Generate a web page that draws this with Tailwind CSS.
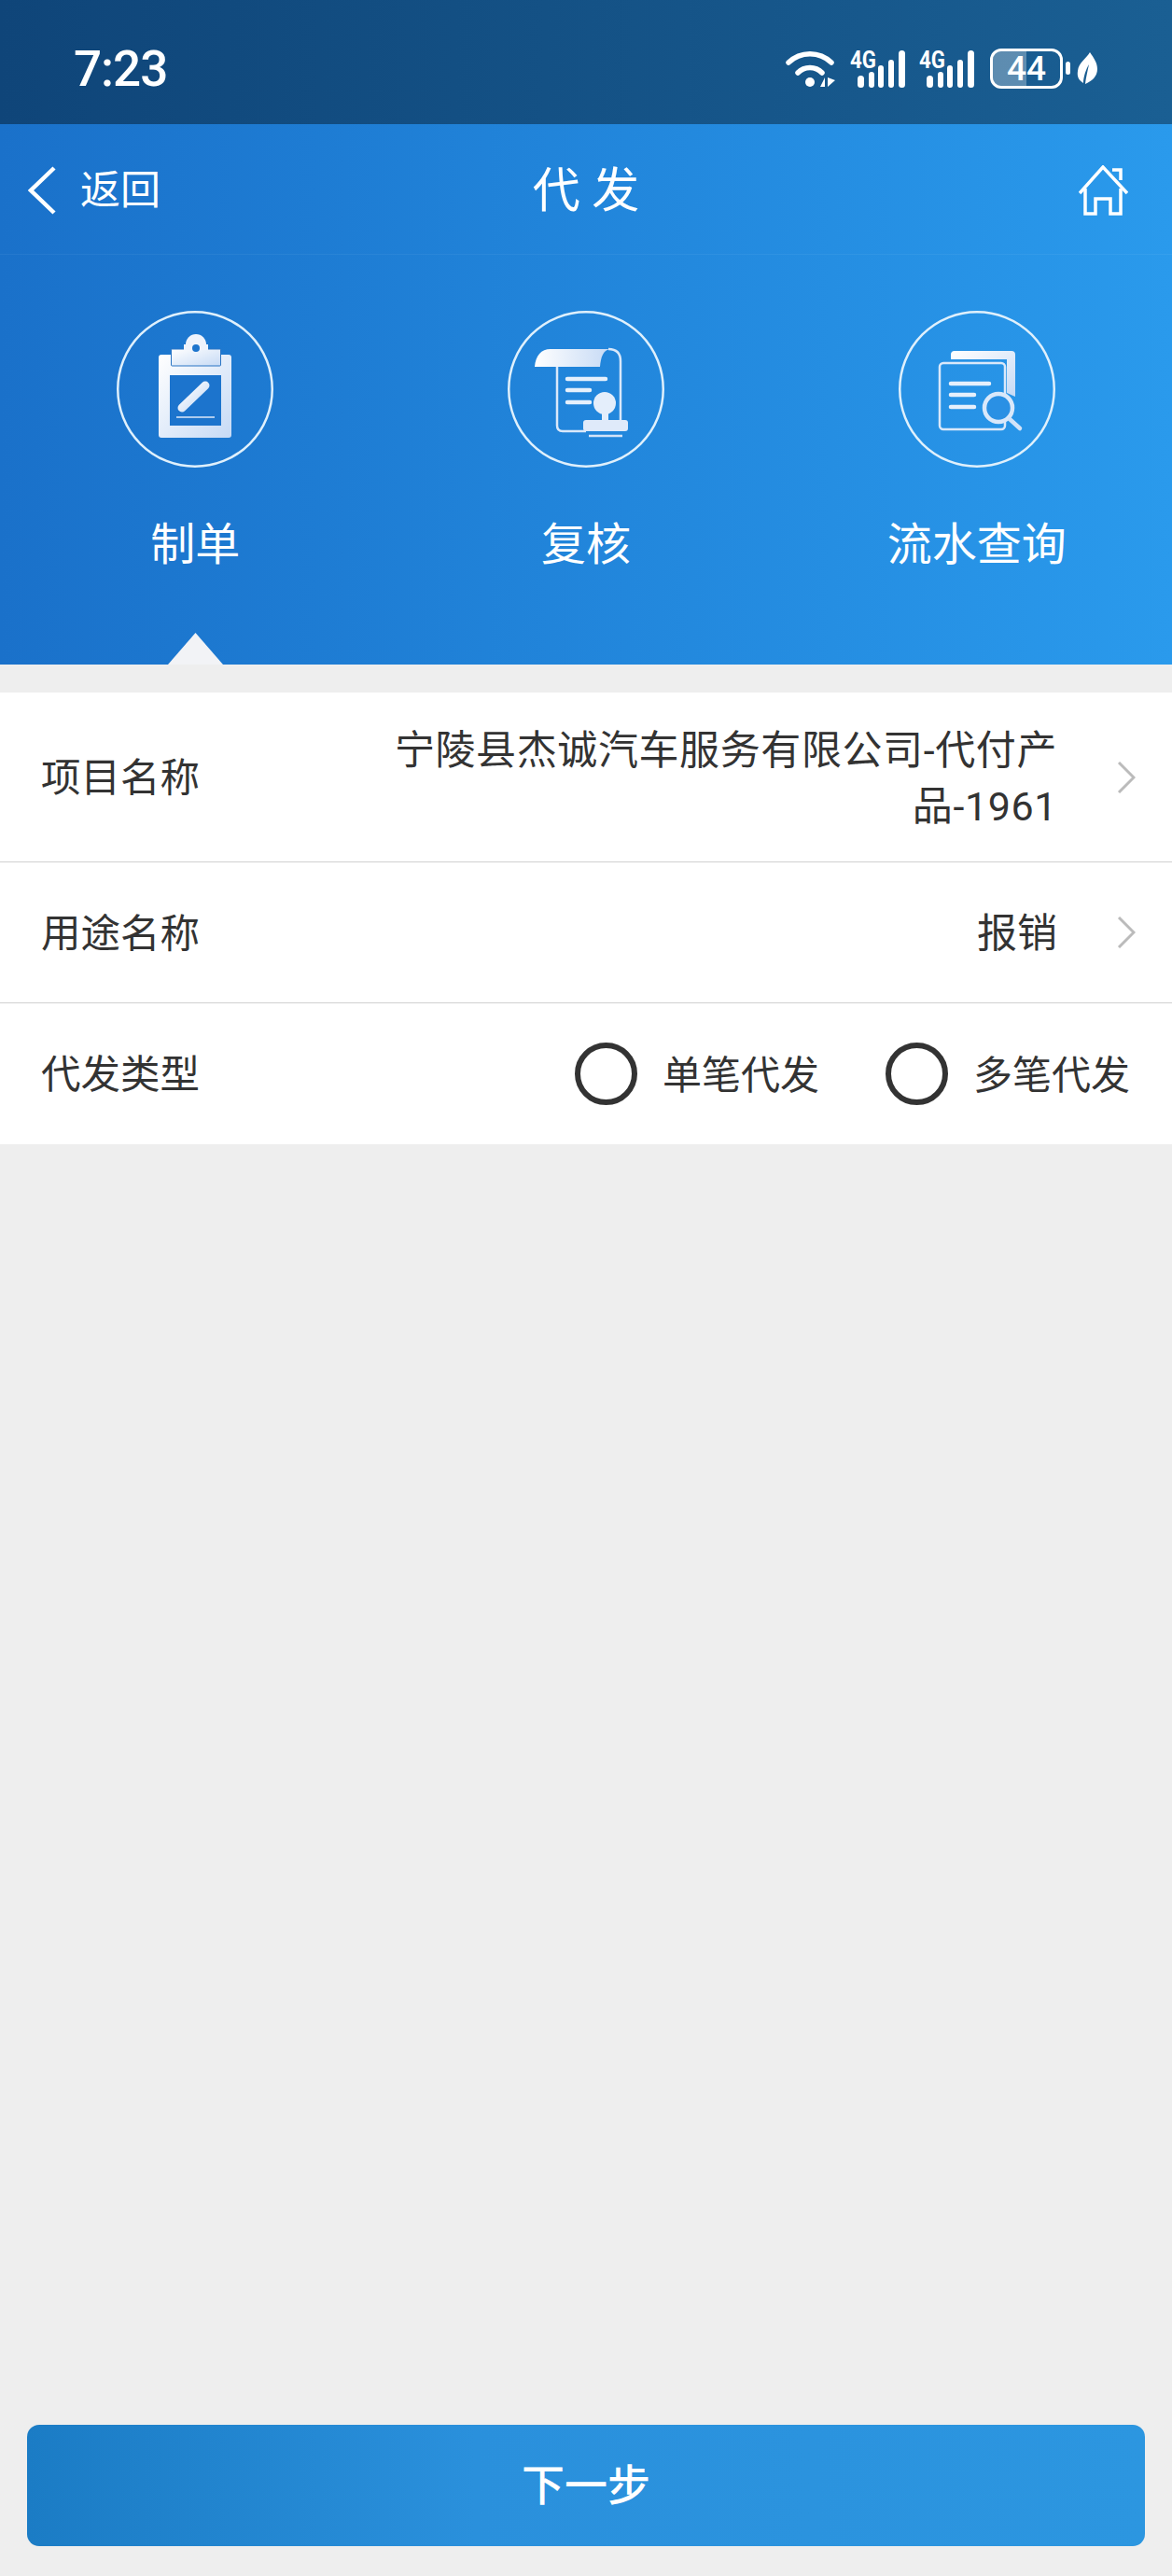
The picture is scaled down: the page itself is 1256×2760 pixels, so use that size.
<!DOCTYPE html>
<html lang="zh-CN">
<head>
  <meta charset="UTF-8" />
  <title>代发</title>
  <meta name="viewport" content="width=device-width, initial-scale=1" />
  <script src="https://cdn.jsdelivr.net/npm/@tailwindcss/browser@4"></script>
</head>
<body class="bg-[#eeeeee] font-['Roboto','Noto_Sans_CJK_SC',sans-serif]">
  <div class="flex flex-col h-[2760px] w-[1256px] overflow-hidden">

    <!-- status bar -->
    <div class="h-[133px] shrink-0 flex items-center justify-between pl-[79px] pr-[80px] pt-[13px] bg-linear-to-r from-[#0f4579] to-[#1a5f93] text-white">
      <span class="pt-[2px] text-[53px] leading-none font-medium tracking-[-1px]">7:23</span>
      <div class="flex items-center">
        <svg class="w-[53px] h-[40px]" viewBox="0 0 53 40" fill="none" stroke="#fff" stroke-linecap="round">
          <path d="M3 14 A33 33 0 0 1 49 14" stroke-width="5.500" />
          <path d="M13 25 A18 18 0 0 1 39 25" stroke-width="5.500" />
          <circle cx="26" cy="35" r="5" fill="#fff" stroke="none" />
          <path d="M37 40 L42 30 V40 Z M45 30 V40 L53 33 Z" fill="#fff" stroke="none" />
        </svg>
        <svg class="ml-[16px] w-[59px] h-[42px] overflow-visible" viewBox="0 0 59 42" fill="#fff">
          <text x="0" y="21" font-size="26" font-weight="700" textLength="28" lengthAdjust="spacingAndGlyphs">4G</text>
          <rect x="8" y="29" width="7" height="13" rx="3.500" />
          <rect x="20" y="25" width="6" height="17" rx="3" />
          <rect x="30" y="18" width="6" height="24" rx="3" />
          <rect x="41" y="12" width="6" height="30" rx="3" />
          <rect x="52" y="2" width="7" height="40" rx="3.500" />
        </svg>
        <svg class="ml-[15px] w-[59px] h-[42px] overflow-visible" viewBox="0 0 59 42" fill="#fff">
          <text x="0" y="21" font-size="26" font-weight="700" textLength="28" lengthAdjust="spacingAndGlyphs">4G</text>
          <rect x="8" y="29" width="7" height="13" rx="3.500" />
          <rect x="20" y="25" width="6" height="17" rx="3" />
          <rect x="30" y="18" width="6" height="24" rx="3" />
          <rect x="41" y="12" width="6" height="30" rx="3" />
          <rect x="52" y="2" width="7" height="40" rx="3.500" />
        </svg>
        <div class="relative ml-[17px] w-[78px] h-[43px] rounded-[12px] border-[3px] border-white overflow-hidden flex items-center justify-center">
          <div class="absolute left-0 top-0 bottom-0 w-[36px] bg-white/30"></div>
          <span class="relative text-[37px] leading-none font-medium">44</span>
        </div>
        <div class="ml-[3px] w-[5px] h-[14px] rounded-full bg-white"></div>
        <svg class="ml-[7px] w-[22px] h-[34px]" viewBox="0 0 22 34" fill="#fff">
          <path d="M14 0 C18 6 22 11 22 18 C22 26 16 31 9 34 C10 26 12 18 13 13 C10 18 7 26 7 33 C2 30 0 26 1 20 C2 11 10 7 14 0 Z" />
        </svg>
      </div>
    </div>

    <!-- blue header -->
    <div class="h-[579px] shrink-0 bg-linear-to-r from-[#1a71ca] to-[#2a9aec] text-white">
      <div class="relative h-[140px] flex items-center justify-between pl-[30px] pr-[47px] pt-[2px] border-b border-white/5">
        <div class="flex items-center gap-[26px]">
          <svg class="w-[30px] h-[52px]" viewBox="0 0 30 52" fill="none" stroke="#fff" stroke-width="4.500">
            <path d="M28 2 L3 26 L28 50" />
          </svg>
          <span class="pt-[2px] text-[43px] leading-none">返回</span>
        </div>
        <span class="absolute left-0 right-0 pt-[2px] text-center text-[51px] leading-none">代 发</span>
        <svg class="w-[53px] h-[54px]" viewBox="0 0 53 54" fill="none" stroke="#fff" stroke-width="3.500">
          <path d="M1 30 L26 2 L52 30" />
          <path d="M36 5 H45 V16" />
          <path d="M7 25 V52 H18 V36 H34 V52 H45 V25" />
        </svg>
      </div>

      <div class="grid grid-cols-3 h-[439px] pt-[60px]">
        <div class="relative flex flex-col items-center">
          <svg class="w-[168px] h-[168px]" viewBox="0 0 168 168" fill="none">
            <defs>
              <linearGradient id="g1" x1="0" y1="0" x2="1" y2="1">
                <stop offset="0" stop-color="#ffffff" />
                <stop offset="1" stop-color="#c6daf5" />
              </linearGradient>
            </defs>
            <circle cx="84" cy="84" r="82.750" stroke="#dff0fc" stroke-width="2.500" />
            <rect x="45" y="47" width="78" height="89" rx="3" fill="url(#g1)" />
            <rect x="57" y="69" width="55" height="54" fill="#1c74cd" />
            <rect x="58.500" y="41" width="53" height="18" rx="1" fill="url(#g1)" stroke="#2a75c4" stroke-width="1" />
            <path d="M72 42 H98 V36 H72 Z" fill="#eef3fc" />
            <path d="M74 36 A11 11 0 0 1 96 36 Z" fill="#eef3fc" />
            <circle cx="85" cy="40" r="4" fill="#1c74cd" />
            <path d="M70 104 L95 80" stroke="url(#g1)" stroke-width="9" stroke-linecap="round" />
            <path d="M64 114 H105" stroke="#dce8f8" stroke-width="1.500" />
          </svg>
          <span class="mt-[53px] text-[48px] leading-[60px]">制单</span>
          <div class="absolute bottom-0 left-[180px] w-[59px] h-[34px] bg-[#f2f3f6] [clip-path:polygon(50%_0,100%_100%,0_100%)]"></div>
        </div>

        <div class="flex flex-col items-center">
          <svg class="w-[168px] h-[168px]" viewBox="0 0 168 168" fill="none">
            <defs>
              <linearGradient id="g2" x1="0" y1="0" x2="1" y2="0">
                <stop offset="0" stop-color="#ffffff" />
                <stop offset="1" stop-color="#c6daf5" />
              </linearGradient>
            </defs>
            <circle cx="84" cy="84" r="82.750" stroke="#dff0fc" stroke-width="2.500" />
            <path d="M53 60 V123 Q53 129 59 129 H84" stroke="#d9e8fa" stroke-width="2.500" />
            <path d="M108 41 Q121 41 121 54 V117" stroke="#d9e8fa" stroke-width="2.500" />
            <path d="M29 60 C30 48 36 41 46 41 H110 C102 42 100 50 99 60 Z" fill="url(#g2)" />
            <path d="M64 73 H105 M64 85 H88 M64 98 H88" stroke="#e6f0fc" stroke-width="4.500" stroke-linecap="round" />
            <circle cx="104" cy="99" r="12" fill="#e4eefb" />
            <rect x="101" y="108" width="7" height="12" fill="#e4eefb" />
            <rect x="81" y="117" width="48" height="12" rx="3" fill="#dfeafa" />
            <path d="M87 134 H123" stroke="#d3e3f8" stroke-width="2.500" />
          </svg>
          <span class="mt-[53px] text-[48px] leading-[60px]">复核</span>
        </div>

        <div class="flex flex-col items-center">
          <svg class="w-[168px] h-[168px]" viewBox="0 0 168 168" fill="none">
            <defs>
              <linearGradient id="g3" x1="0" y1="0" x2="1" y2="1">
                <stop offset="0" stop-color="#ffffff" />
                <stop offset="1" stop-color="#c6daf5" />
              </linearGradient>
            </defs>
            <circle cx="84" cy="84" r="82.750" stroke="#dff0fc" stroke-width="2.500" />
            <path d="M56 52 V47 Q56 43 60 43 H121 Q125 43 125 47 V92 L116 88 V52 Z" fill="url(#g3)" />
            <rect x="44" y="56" width="70" height="71" rx="4" stroke="#d9e8fa" stroke-width="2.500" />
            <path d="M56 78 H97 M56 90 H81 M56 103 H81" stroke="#e6f0fc" stroke-width="4.500" stroke-linecap="round" />
            <circle cx="107" cy="104" r="15" fill="#2a90e4" stroke="#d9e8fa" stroke-width="4.500" />
            <path d="M119 116 L130 126" stroke="#d3e3f8" stroke-width="4.500" stroke-linecap="round" />
          </svg>
          <span class="mt-[53px] text-[48px] leading-[60px]">流水查询</span>
        </div>
      </div>
    </div>

    <!-- form rows -->
    <div class="mt-[30px] bg-white text-[#333333] text-[43px]">
      <div class="h-[182px] flex items-center pl-[44px] pr-[39px] border-b border-[#d0d0d0]">
        <span class="shrink-0 pt-[3px] text-[42.5px]">项目名称</span>
        <span class="ml-auto w-[720px] pt-[3px] text-right leading-[60px] tracking-[0.6px]">宁陵县杰诚汽车服务有限公司-代付产品-1961</span>
        <svg class="ml-[64px] w-[20px] h-[34px] shrink-0" viewBox="0 0 20 34" fill="none" stroke="#bbbbbb" stroke-width="3">
          <path d="M2 1 L18 17 L2 33" />
        </svg>
      </div>
      <div class="h-[151px] flex items-center pl-[44px] pr-[39px] border-b border-[#d0d0d0]">
        <span class="pt-[3px] text-[42.5px]">用途名称</span>
        <span class="ml-auto pt-[3px]">报销</span>
        <svg class="ml-[64px] w-[20px] h-[34px] shrink-0" viewBox="0 0 20 34" fill="none" stroke="#bbbbbb" stroke-width="3">
          <path d="M2 1 L18 17 L2 33" />
        </svg>
      </div>
      <div class="h-[151px] flex items-center pl-[44px] pr-[45px]">
        <span class="pt-[3px] text-[42.5px]">代发类型</span>
        <div class="ml-auto flex items-center">
          <div class="w-[67px] h-[67px] rounded-full border-[6px] border-[#333333]"></div>
          <span class="ml-[27px] pt-[3px] text-[42px]">单笔代发</span>
          <div class="ml-[71px] w-[67px] h-[67px] rounded-full border-[6px] border-[#333333]"></div>
          <span class="ml-[27px] pt-[3px] text-[42px]">多笔代发</span>
        </div>
      </div>
    </div>

    <!-- next button -->
    <div class="mt-auto mb-[32px] mx-[29px] h-[130px] rounded-[13px] bg-linear-to-r from-[#1b7cc5] via-[#2a90dc] via-40% to-[#2c96e0] flex items-center justify-center text-white text-[46px] font-medium">
      下一步
    </div>
  </div>
</body>
</html>
